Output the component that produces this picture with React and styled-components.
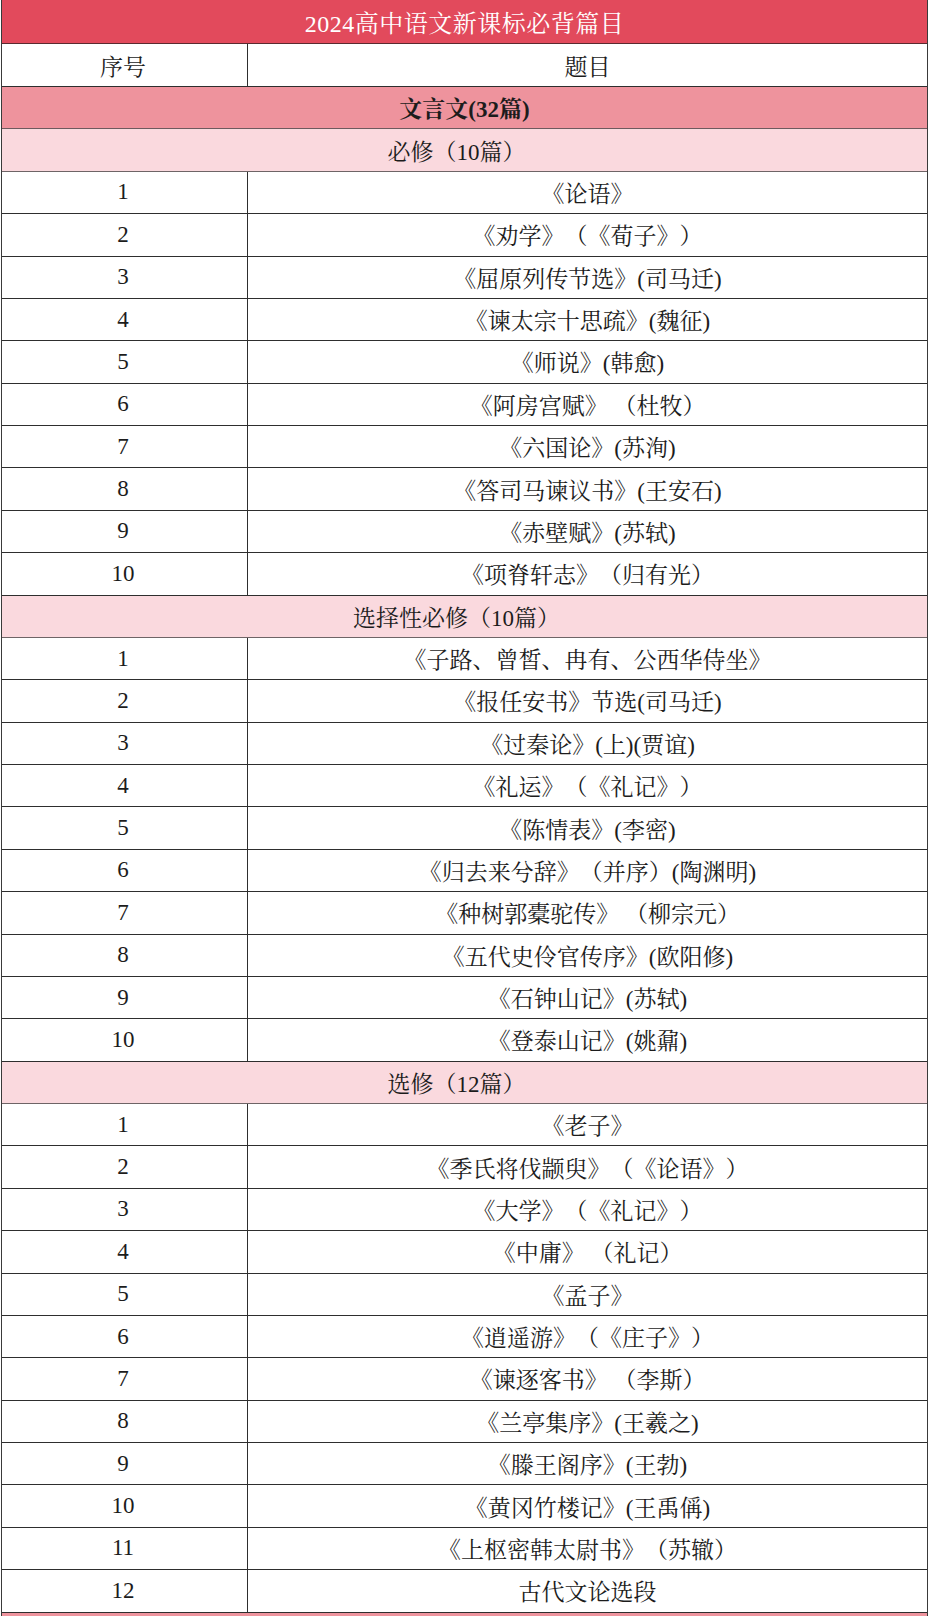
import React from "react";
import styled, { createGlobalStyle } from "styled-components";

const GlobalStyle = createGlobalStyle`
  * { box-sizing: border-box; }
  body {
    margin: 0;
    background: #ffffff;
    font-family: "Liberation Serif", "Noto Serif CJK SC", "Noto Sans CJK SC", serif;
    color: #1c1c1c;
    text-spacing-trim: space-all;
  }
`;

const sections = [
  {
    title: "必修（10篇）",
    items: [
      "《论语》",
      "《劝学》（《荀子》）",
      "《屈原列传节选》(司马迁)",
      "《谏太宗十思疏》(魏征)",
      "《师说》(韩愈)",
      "《阿房宫赋》 （杜牧）",
      "《六国论》(苏洵)",
      "《答司马谏议书》(王安石)",
      "《赤壁赋》(苏轼)",
      "《项脊轩志》（归有光）",
    ],
  },
  {
    title: "选择性必修（10篇）",
    items: [
      "《子路、曾皙、冉有、公西华侍坐》",
      "《报任安书》节选(司马迁)",
      "《过秦论》(上)(贾谊)",
      "《礼运》（《礼记》）",
      "《陈情表》(李密)",
      "《归去来兮辞》（并序）(陶渊明)",
      "《种树郭橐驼传》 （柳宗元）",
      "《五代史伶官传序》(欧阳修)",
      "《石钟山记》(苏轼)",
      "《登泰山记》(姚鼐)",
    ],
  },
  {
    title: "选修（12篇）",
    items: [
      "《老子》",
      "《季氏将伐颛臾》（《论语》）",
      "《大学》（《礼记》）",
      "《中庸》 （礼记）",
      "《孟子》",
      "《逍遥游》（《庄子》）",
      "《谏逐客书》 （李斯）",
      "《兰亭集序》(王羲之)",
      "《滕王阁序》(王勃)",
      "《黄冈竹楼记》(王禹偁)",
      "《上枢密韩太尉书》（苏辙）",
      "古代文论选段",
    ],
  },
];

function App() {
  return (
    <>
      <GlobalStyle />
      <Page>
        <Table>
          <TitleRow>2024高中语文新课标必背篇目</TitleRow>
          <Row $h={43}>
            <NumCell>序号</NumCell>
            <TextCell>题目</TextCell>
          </Row>
          <GroupRow>文言文(32篇)</GroupRow>
          {sections.map((section) => (
            <React.Fragment key={section.title}>
              <SubRow>{section.title}</SubRow>
              {section.items.map((item, i) => (
                <Row key={item}>
                  <NumCell>{i + 1}</NumCell>
                  <TextCell>{item}</TextCell>
                </Row>
              ))}
            </React.Fragment>
          ))}
          <GroupRow />
        </Table>
      </Page>
    </>
  );
}

const Page = styled.div`
  padding-left: 1px;
`;

const Table = styled.div`
  width: 927px;
  border-left: 1px solid #3a3a3a;
  border-right: 1px solid #3a3a3a;
  display: flex;
  flex-direction: column;
`;

const TitleRow = styled.div`
  height: 44px;
  background-color: #e24a5c;
  color: #ffffff;
  font-size: 24px;
  display: flex;
  align-items: center;
  justify-content: center;
  border-bottom: 1px solid #5a2a30;
  letter-spacing: 0.5px;
`;

const Row = styled.div`
  height: ${(p) => (p.$h ? `${p.$h}px` : "42.39px")};
  display: grid;
  grid-template-columns: 246px 1fr;
  border-bottom: 1px solid #2e2e2e;
  background-color: #ffffff;
  font-size: 23px;
`;

const NumCell = styled.div`
  border-right: 1px solid #2e2e2e;
  display: flex;
  align-items: center;
  justify-content: center;
  padding-right: 3px;
`;

const TextCell = styled.div`
  display: flex;
  align-items: center;
  justify-content: center;
  white-space: pre;
`;

const SubRow = styled.div`
  height: 42.39px;
  background-color: #fad9de;
  border-bottom: 1px solid #6e6466;
  font-size: 23px;
  display: flex;
  align-items: center;
  justify-content: center;
  padding-right: 16px;
`;

const GroupRow = styled.div`
  height: 42.39px;
  background-color: #ee939d;
  border-bottom: 1px solid #6e5a5e;
  font-size: 23px;
  font-weight: bold;
  display: flex;
  align-items: center;
  justify-content: center;
`;

export default App;
